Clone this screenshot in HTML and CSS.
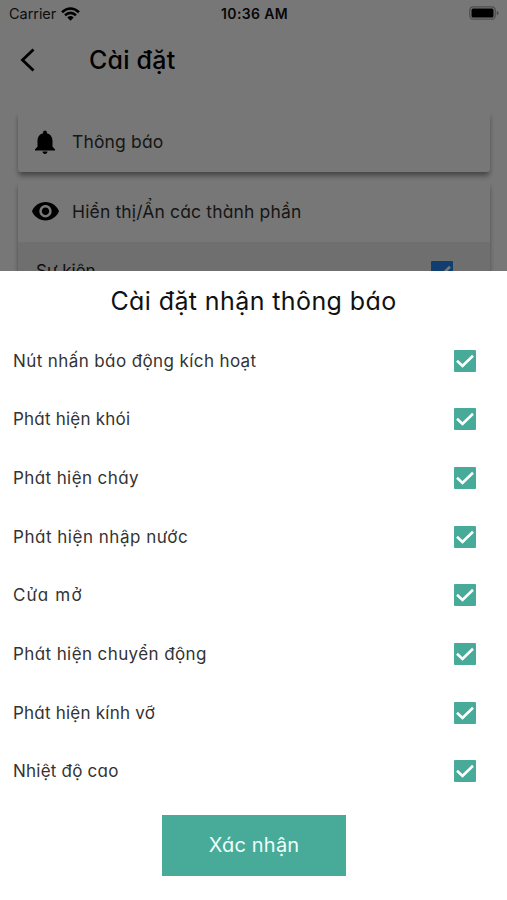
FILE: index.html
```html
<!DOCTYPE html>
<html lang="vi">
<head>
<meta charset="utf-8">
<title>Cài đặt</title>
<link rel="stylesheet" href="styles.css">
</head>
<body>
<svg class="defs" aria-hidden="true"><symbol id="check" viewBox="0 0 22 22"><path d="M3 10.800 8.500 16 19 5.800" fill="none" stroke="#fff" stroke-width="2.600"/></symbol></svg>
<div class="screen">
  <div class="page">
    <header class="status">
      <div class="carrier"><span>Carrier</span>
        <svg width="19" height="14" viewBox="0 0 19 14"><g fill="none" stroke="#000" stroke-width="2.5"><path d="M1 5.2Q9.500-2.300 18 5.200"/><path d="M4 8.300Q9.500 3.500 15 8.300"/></g><path d="M6.300 10.500Q9.500 7.700 12.700 10.500L9.500 13.700Z"/></svg>
      </div>
      <div class="clock">10:36 AM</div>
      <svg class="battery" width="31" height="14" viewBox="0 0 31 14"><rect x=".8" y=".8" width="25.400" height="12.400" rx="3.500" fill="none" stroke="#000" stroke-opacity=".35" stroke-width="1.300"/><rect x="2.500" y="2.500" width="22" height="9" rx="1.500"/><path d="M27.800 4.700Q31.500 7 27.800 9.300Z" fill-opacity=".4"/></svg>
    </header>
    <nav class="nav">
      <svg width="16" height="24" viewBox="0 0 16 24"><path d="M13.500 1.500 2.500 12l11 10.500" fill="none" stroke="#000" stroke-width="2.800"/></svg>
      <h1>Cài đ<i>ặ</i>t</h1>
    </nav>
    <main class="cards">
      <section class="card"><div class="head">
        <svg viewBox="4 2 16 20" width="20" height="24" preserveAspectRatio="none"><path d="M12 22c1.100 0 2-.9 2-2h-4c0 1.100.9 2 2 2zm6-6v-5c0-3.070-1.640-5.640-4.500-6.320V4c0-.83-.67-1.500-1.500-1.500s-1.500.67-1.500 1.500v.68C7.630 5.360 6 7.920 6 11v5l-2 2v1h16v-1l-2-2z"/></svg>
        <span>Thông báo</span></div></section>
      <section class="card"><div class="head">
        <svg viewBox="1 4.500 22 15" width="27" height="18.500"><path d="M12 4.500C7 4.500 2.730 7.610 1 12c1.730 4.390 6 7.500 11 7.500s9.270-3.110 11-7.500c-1.730-4.390-6-7.500-11-7.500zM12 17c-2.760 0-5-2.240-5-5s2.240-5 5-5 5 2.240 5 5-2.240 5-5 5zm0-8c-1.660 0-3 1.340-3 3s1.340 3 3 3 3-1.340 3-3-1.340-3-3-3z"/></svg>
        <span>Hiển thị/Ẩn các thành ph<i>ầ</i>n</span></div>
        <div class="sub"><span>Sự kiện</span><svg class="box blue"><use href="#check"/></svg></div></section>
    </main>
  </div>
  <div class="shade"></div>
  <div class="sheet">
    <h2>Cài đ<i>ặ</i>t nh<i>ậ</i>n thông báo</h2>
    <ul>
      <li><span>Nút nh<i>ấ</i>n báo động kích ho<i>ạ</i>t</span><svg class="box"><use href="#check"/></svg></li>
      <li class="snug"><span>Phát hiện khói</span><svg class="box"><use href="#check"/></svg></li>
      <li><span>Phát hiện cháy</span><svg class="box"><use href="#check"/></svg></li>
      <li class="loose"><span>Phát hiện nh<i>ậ</i>p nước</span><svg class="box"><use href="#check"/></svg></li>
      <li class="wide"><span>Cửa mở</span><svg class="box"><use href="#check"/></svg></li>
      <li><span>Phát hiện chuyển động</span><svg class="box"><use href="#check"/></svg></li>
      <li class="snug"><span>Phát hiện kính vỡ</span><svg class="box"><use href="#check"/></svg></li>
      <li class="snug"><span>Nhiệt độ cao</span><svg class="box"><use href="#check"/></svg></li>
    </ul>
    <button>Xác nh<i>ậ</i>n</button>
  </div>
</div>
</body>
</html>
```
FILE: styles.css
```css
* { box-sizing: border-box; }
body { margin: 0; background: #fff; font-family: Inter, "Open Sans", sans-serif; font-feature-settings: "cv11" 1; }
i { font-style: normal; font-feature-settings: "cv11" 0; }
svg { display: block; flex: none; }
.defs { position: absolute; width: 0; height: 0; }
.screen { position: relative; width: 507px; height: 900px; overflow: hidden; display: flex; flex-direction: column; }
.page { height: 270.5px; overflow: hidden; flex: none; }
.shade { position: absolute; top: 0; left: 0; right: 0; height: 270.5px; background: rgba(0, 0, 0, .533); }
.status { height: 27px; padding: 0 7px 0 9px; display: grid; grid-template-columns: 1fr auto 1fr; align-items: center; font-size: 14.5px; font-feature-settings: normal; color: #222; }
.carrier { display: flex; align-items: center; gap: 5px; letter-spacing: -.05px; }
.clock { font-weight: 600; font-size: 14px; letter-spacing: .35px; color: #111; }
.battery { justify-self: end; margin-top: -1px; }
.nav { height: 64px; display: flex; align-items: center; padding: 1px 0 0 20px; gap: 53px; }
.nav h1 { margin: 0; font-size: 25px; font-weight: 500; letter-spacing: .2px; }
.cards { padding: 20px 17px 0 18px; display: flex; flex-direction: column; gap: 9px; }
.card { background: #fff; border-radius: 3px; box-shadow: 0 4px 5px -1px rgba(0, 0, 0, .38), 0 5px 6px rgba(0, 0, 0, .1); }
.head { height: 61px; display: grid; grid-template-columns: 54px 1fr; align-items: center; font-size: 17.5px; letter-spacing: .15px; color: #333; }
.head svg { justify-self: center; }
.sub { height: 60px; background: #ededed; display: flex; justify-content: space-between; padding: 19px 37px 0 18px; font-size: 17px; line-height: 21px; color: #222; }
.box { width: 22px; height: 22px; background: #48ab99; border-radius: 1px; }
.box.blue { background: #2186ee; }
.sheet { flex: 1; background: #fff; display: flex; flex-direction: column; align-items: center; }
h2 { margin: 0; height: 61px; line-height: 60px; font-size: 25px; font-weight: 400; letter-spacing: .4px; color: #111; }
ul { list-style: none; margin: 0; padding: 0 31px 0 13px; width: 100%; }
li { height: 58.625px; display: flex; align-items: center; justify-content: space-between; font-size: 17px; letter-spacing: .4px; color: #333; }
.snug { letter-spacing: .22px; }
.loose { letter-spacing: .52px; }
.wide { letter-spacing: 1.2px; }
button { margin: 14px 0 0 1px; width: 184px; height: 61px; border: 0; background: #48ab99; color: #eefffb; font: inherit; font-size: 20px; letter-spacing: .2px; font-feature-settings: inherit; }
```
